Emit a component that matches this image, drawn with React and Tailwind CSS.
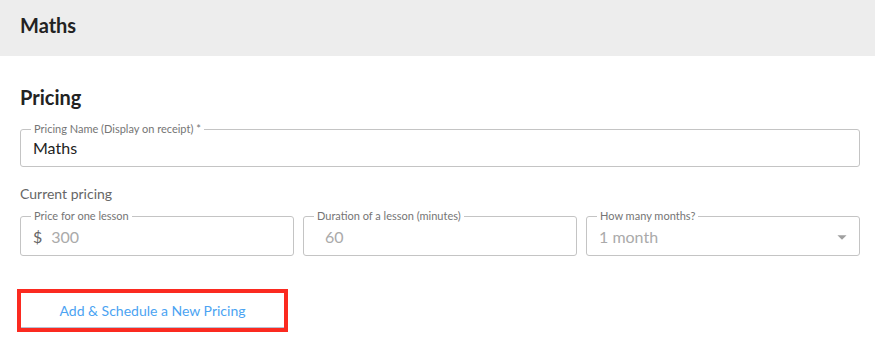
import React from "react";

const Field = ({ label, children, className = "" }) => {
  return (
    <fieldset className={`border border-[#c4c4c4] rounded-[3px] px-[12px] pb-[3px] m-0 min-w-0 ${className}`}>
      <legend className="text-[11px] leading-[12px] text-[#757575] px-[3px] -ml-[2px]">
        {label}
      </legend>
      {children}
    </fieldset>
  );
};

const App = () => {
  return (
    <div className="w-[875px] h-[343px] bg-white font-['Lato',sans-serif] overflow-hidden">
      <div className="h-[56px] bg-[#ededed] pl-5 pt-[13px]">
        <h1 className="text-[20px] leading-[24px] font-bold text-[#222]">Maths</h1>
      </div>

      <div className="pl-5 pr-[15px]">
        <h2 className="mt-[29px] text-[20px] leading-[24px] font-bold text-[#222]">Pricing</h2>

        <Field label="Pricing Name (Display on receipt) *" className="mt-[14px]">
          <div className="h-[26px] mb-[2px] flex items-center text-[16px] text-[#222]">Maths</div>
        </Field>

        <p className="mt-[18px] text-[14px] leading-[17px] text-[#666]">Current pricing</p>

        <div className="mt-[8px] grid grid-cols-3 gap-[9px]">
          <Field label="Price for one lesson">
            <div className="h-[29px] mb-[1px] flex items-center text-[16px]">
              <span className="text-[#666] mr-[9px]">$</span>
              <span className="text-[#aaa]">300</span>
            </div>
          </Field>
          <Field label="Duration of a lesson (minutes)">
            <div className="h-[29px] mb-[1px] flex items-center text-[16px] text-[#aaa] pl-[9px]">60</div>
          </Field>
          <Field label="How many months?">
            <div className="h-[29px] mb-[1px] flex items-center justify-between text-[16px] text-[#aaa]">
              <span>1 month</span>
              <svg viewBox="0 0 24 24" className="w-[22px] h-[22px] -mr-[6px] fill-[#a0a0a0]">
                <path d="M7 10l5 5 5-5z" />
              </svg>
            </div>
          </Field>
        </div>

        <div className="mt-[33px] -ml-[3px] w-[271px] h-[43px] border-4 border-[#fb2a20]">
          <button className="w-full h-full bg-white border-b border-[#b6c1d4] text-[14px] text-[#4ba3f2] flex items-center justify-center">
            Add &amp; Schedule a New Pricing
          </button>
        </div>
      </div>
    </div>
  );
};

export default App;
